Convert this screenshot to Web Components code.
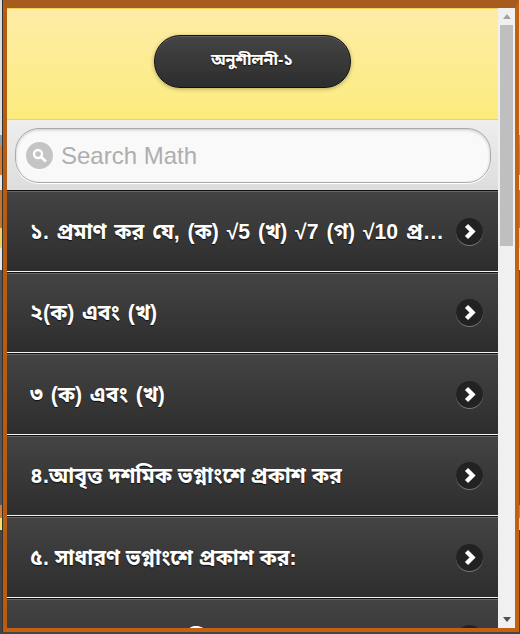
<!DOCTYPE html>
<html>
<head>
<meta charset="utf-8">
<style>
  html, body { margin: 0; height: 100%; overflow: hidden; background: #e9e9e9; }
</style>
</head>
<body>
<app-window>
  <page-header title-text="অনুশীলনী-১"></page-header>
  <search-box placeholder="Search Math"></search-box>
  <list-item wide>১. প্রমাণ কর যে, (ক) √5 (খ) √7 (গ) √10 প্রমাণ কর যে অমূলদ</list-item>
  <list-item wide>২(ক) এবং (খ)</list-item>
  <list-item wide>৩ (ক) এবং (খ)</list-item>
  <list-item>৪.আবৃত্ত দশমিক ভগ্নাংশে প্রকাশ কর</list-item>
  <list-item>৫. সাধারণ ভগ্নাংশে প্রকাশ কর:</list-item>
  <list-item>৬. সদৃশ আবৃত্ত দশমিকে প্রকাশ কর</list-item>
</app-window>
<script>
const fontStack = '"Liberation Sans", "Noto Sans Bengali", "Lohit Bengali", "Noto Sans", sans-serif';

class AppWindow extends HTMLElement {
  constructor() {
    super();
    const root = this.attachShadow({mode: 'open'});
    root.innerHTML = `
      <style>
        :host {
          display: flex;
          width: 520px;
          height: 634px;
          box-sizing: border-box;
          padding: 0 1px 2px 3px;
          background: linear-gradient(#ddd 0 135px, #8a9aa8 135px 146px, #d87a30 146px 175px, #e8e8e8 175px 190px,
            #c9742c 190px 228px, #f5d060 228px 248px, #e6e6e6 248px 270px, #555 270px 505px,
            #d87a30 505px 518px, #f5e060 518px 530px, #444 530px);
        }
        .frame {
          flex: 1;
          display: flex;
          min-width: 0;
          border: solid #c4600f;
          border-width: 8px 4px 4px 4px;
          border-top-color: #a65c1f;
          border-left-color: #b85c12;
          box-shadow: -1px 0 0 #333;
          overflow: hidden;
        }
        .content {
          flex: 1;
          min-width: 0;
          overflow: hidden;
          background: #e9e9e9;
        }
      </style>
      <div class="frame">
        <div class="content"><slot></slot></div>
        <scroll-track></scroll-track>
      </div>
    `;
  }
}

class ScrollTrack extends HTMLElement {
  constructor() {
    super();
    const root = this.attachShadow({mode: 'open'});
    root.innerHTML = `
      <style>
        :host {
          display: flex;
          flex-direction: column;
          align-items: center;
          width: 17px;
          flex: none;
          background: #f0f0f0;
        }
        .arrow { flex: none; height: 17px; display: flex; align-items: center; justify-content: center; }
        .space { flex: 1; width: 100%; padding: 0 2px; box-sizing: border-box; }
        .thumb { height: 221px; background: #bfbfbf; }
      </style>
      <div class="arrow"><svg width="8" height="5"><path d="M4 0L8 5H0z" fill="#a3a3a3"/></svg></div>
      <div class="space"><div class="thumb"></div></div>
      <div class="arrow"><svg width="8" height="5"><path d="M0 0H8L4 5z" fill="#505050"/></svg></div>
    `;
  }
}

class PageHeader extends HTMLElement {
  constructor() {
    super();
    const root = this.attachShadow({mode: 'open'});
    root.innerHTML = `
      <style>
        :host {
          display: flex;
          align-items: center;
          justify-content: center;
          height: 112px;
          box-sizing: border-box;
          padding-bottom: 6px;
          padding-right: 1px;
          background: linear-gradient(#feeca6, #fcec7e);
          border-top: 1px solid #f6cf5a;
          border-bottom: 1px solid #f6cf5a;
        }
        button {
          all: unset;
          box-sizing: border-box;
          width: 197px;
          height: 53px;
          border-radius: 26px;
          border: 1px solid #111;
          background: linear-gradient(#444, #2d2d2d);
          box-shadow: 0 1px 4px rgba(0,0,0,.3), inset 0 1px 0 rgba(255,255,255,.15);
          color: #fff;
          font: bold 16px ${fontStack};
          text-align: center;
          text-shadow: 0 1px 1px #111;
        }
      </style>
      <button></button>
    `;
    root.querySelector('button').textContent = this.getAttribute('title-text');
  }
}

class SearchBox extends HTMLElement {
  constructor() {
    super();
    const root = this.attachShadow({mode: 'open'});
    root.innerHTML = `
      <style>
        :host {
          display: block;
          box-sizing: border-box;
          height: 70px;
          padding: 8px 7px 8px 8px;
          background: linear-gradient(#eee, #ddd);
        }
        .field {
          display: flex;
          align-items: center;
          gap: 8px;
          height: 55px;
          box-sizing: border-box;
          padding-left: 10px;
          border: 1px solid #aaa;
          border-radius: 24px;
          background: #f9f9f9;
          box-shadow: inset 0 1px 3px rgba(0,0,0,.2), 0 1px 0 #fff;
        }
        .icon { flex: none; width: 27px; height: 27px; border-radius: 50%; background: #c4c4c4; display: flex; align-items: center; justify-content: center; }
        span { font: 24px "Liberation Sans", sans-serif; color: #aeaeae; }
      </style>
      <div class="field">
        <div class="icon">
          <svg width="17" height="17" viewBox="0 0 17 17" fill="none" stroke="#fff">
            <circle cx="7" cy="7" r="4" stroke-width="2.4"/>
            <path d="M10 10L15 14.5" stroke-width="3"/>
          </svg>
        </div>
        <span></span>
      </div>
    `;
    root.querySelector('span').textContent = this.getAttribute('placeholder');
  }
}

class ListItem extends HTMLElement {
  constructor() {
    super();
    const root = this.attachShadow({mode: 'open'});
    root.innerHTML = `
      <style>
        :host {
          display: flex;
          align-items: center;
          gap: 10px;
          height: 81.5px;
          box-sizing: border-box;
          padding: 1px 15px 0 23px;
          border-top: 1px solid #111;
          border-bottom: 1px solid #f4f4f4;
          background: linear-gradient(#444, #2d2d2d);
          box-shadow: inset 0 1px 0 #666;
          color: #fff;
          font: bold 21.2px ${fontStack};
          text-shadow: 0 1px 1px #111;
        }
        :host([wide]) { word-spacing: 2px; }
        .label { flex: 1; min-width: 0; padding-top: 5px; white-space: nowrap; overflow: hidden; text-overflow: ellipsis; }
        .go {
          flex: none;
          width: 27px;
          height: 27px;
          border-radius: 50%;
          background: #222;
          box-shadow: 0 1px 0 #777;
          display: flex;
          align-items: center;
          justify-content: center;
        }
      </style>
      <div class="label"><slot></slot></div>
      <div class="go">
        <svg width="27" height="27" viewBox="0 0 27 27"><path d="M10.5 7.5L16.5 13.5L10.5 19.5" fill="none" stroke="#fff" stroke-width="4.4"/></svg>
      </div>
    `;
  }
}

customElements.define('scroll-track', ScrollTrack);
customElements.define('app-window', AppWindow);
customElements.define('page-header', PageHeader);
customElements.define('search-box', SearchBox);
customElements.define('list-item', ListItem);
</script>
</body>
</html>
